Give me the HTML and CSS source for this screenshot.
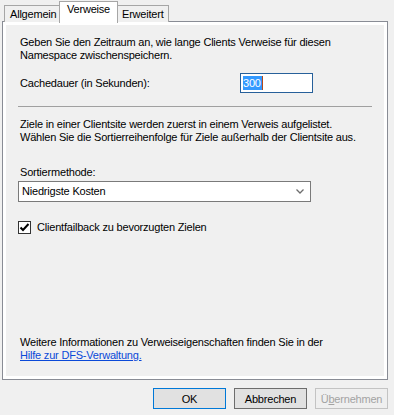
FILE: index.html
```html
<!DOCTYPE html>
<html lang="de">
<head>
    <meta charset="UTF-8">
    <title>Eigenschaften</title>
    <link rel="stylesheet" href="styles.css">
</head>
<body>
    <div class="dialog">
        <div class="tabs">
            <div class="tab tab-general">Allgemein</div>
            <div class="tab tab-referrals active">Verweise</div>
            <div class="tab tab-advanced">Erweitert</div>
        </div>

        <div class="panel">
            <div class="page">
                <p class="text first">Geben Sie den Zeitraum an, wie lange Clients Verweise für diesen<br>Namespace zwischenspeichern.</p>

                <div class="row">
                    <label class="text row-label" for="cache">Cachedauer (in Sekunden):</label>
                    <div class="input" id="cache"><span class="selected">300</span><span class="caret"></span></div>
                </div>

                <div class="separator"></div>

                <p class="text second">Ziele in einer Clientsite werden zuerst in einem Verweis aufgelistet.<br>Wählen Sie die Sortierreihenfolge für Ziele außerhalb der Clientsite aus.</p>

                <label class="text sort-label">Sortiermethode:</label>
                <div class="select">
                    <span>Niedrigste Kosten</span>
                    <svg class="chevron" width="8" height="5" viewBox="0 0 8 5">
                        <path d="M0.5 0.5 L4 4 L7.5 0.5" fill="none" stroke="#6e6e6e" stroke-width="1.3"/>
                    </svg>
                </div>

                <div class="check">
                    <span class="box">
                        <svg width="11" height="11" viewBox="0 0 11 11">
                            <path d="M1.5 5.5 L4 8 L9.5 2" fill="none" stroke="#000" stroke-width="2"/>
                        </svg>
                    </span>
                    <span class="text">Clientfailback zu bevorzugten Zielen</span>
                </div>

                <div class="spacer"></div>

                <p class="text">Weitere Informationen zu Verweiseigenschaften finden Sie in der<br><a href="#" class="link">Hilfe zur DFS-Verwaltung.</a></p>
            </div>
        </div>

        <div class="buttons">
            <button class="btn default">OK</button>
            <button class="btn">Abbrechen</button>
            <button class="btn disabled">Ü<u>b</u>ernehmen</button>
        </div>
    </div>
</body>
</html>
```

FILE: styles.css
```css
body {
    margin: 0;
    background-color: #f0f0f0;
    font-family: "Liberation Sans", Arial, sans-serif;
    font-size: 11px;
    line-height: 13px;
    letter-spacing: -0.2px;
    color: #000;
}
.dialog {
    width: 394px;
    height: 415px;
}
.tabs {
    display: flex;
    align-items: flex-end;
    height: 22px;
    padding-left: 4px;
    position: relative;
    z-index: 1;
}
.tab {
    height: 17px;
    box-sizing: border-box;
    padding: 2px 0 0 5px;
    border: 1px solid #a6a6a6;
    border-bottom: none;
    background-color: #f0f0f0;
}
.tab-general {
    width: 55px;
    border-right: none;
}
.tab-referrals {
    width: 59px;
}
.tab-advanced {
    width: 51px;
    border-left: none;
    padding-left: 4px;
}
.tab.active {
    height: 22px;
    padding: 1px 0 0 7px;
    background-color: #fff;
    margin-bottom: -1px;
}
.panel {
    margin: -1px 6px 0 2px;
    height: 359px;
    box-sizing: border-box;
    border: 1px solid #898c95;
}
.page {
    height: 100%;
    box-sizing: border-box;
    border: 3px solid #fff;
    padding: 11px 12px 14px 12px;
    display: flex;
    flex-direction: column;
}
.text {
    display: block;
    margin: 0 0 0 2px;
}
.row {
    display: flex;
    align-items: center;
    margin-top: 11px;
    height: 20px;
}
.row-label {
    width: 220px;
}
.input {
    width: 73px;
    height: 20px;
    box-sizing: border-box;
    border: 1px solid #27609a;
    background-color: #fff;
    padding: 2px 0 0 2px;
    display: flex;
    align-items: flex-start;
}
.selected {
    background-color: #3399ff;
    color: #fff;
    line-height: 14px;
    padding-right: 1px;
}
.caret {
    width: 1px;
    height: 14px;
    background-color: #b64a1a;
}
.separator {
    margin-top: 13px;
    width: 354px;
    height: 1px;
    background-color: #a0a0a0;
}
.second {
    margin-top: 11px;
}
.sort-label {
    margin-top: 22px;
}
.select {
    margin-top: 2px;
    width: 293px;
    height: 21px;
    box-sizing: border-box;
    border: 1px solid #7a7a7a;
    background-color: #fff;
    display: flex;
    align-items: center;
    justify-content: space-between;
    padding: 0 6px 0 3px;
}
.check {
    display: flex;
    align-items: center;
    margin-top: 19px;
    height: 13px;
}
.box {
    width: 13px;
    height: 13px;
    box-sizing: border-box;
    border: 1px solid #333;
    background-color: #fff;
    display: flex;
    align-items: center;
    justify-content: center;
    margin-right: 4px;
}
.check .text {
    margin-left: 2px;
}
.spacer {
    flex: 1;
}
.link {
    color: #0a49d8;
    text-decoration: underline;
}
.buttons {
    display: flex;
    justify-content: flex-end;
    gap: 8px;
    margin: 8px 6px 0 0;
}
.btn {
    width: 73px;
    height: 21px;
    box-sizing: border-box;
    border: 1px solid #6d6d6d;
    background-color: #e1e1e1;
    font-family: "Liberation Sans", Arial, sans-serif;
    font-size: 11px;
    letter-spacing: -0.2px;
    color: #000;
    padding: 0;
}
.btn.default {
    border-color: #0078d7;
}
.btn.disabled {
    border-color: #c3c3c3;
    background-color: #efefef;
    color: #a3a3a3;
}
```
